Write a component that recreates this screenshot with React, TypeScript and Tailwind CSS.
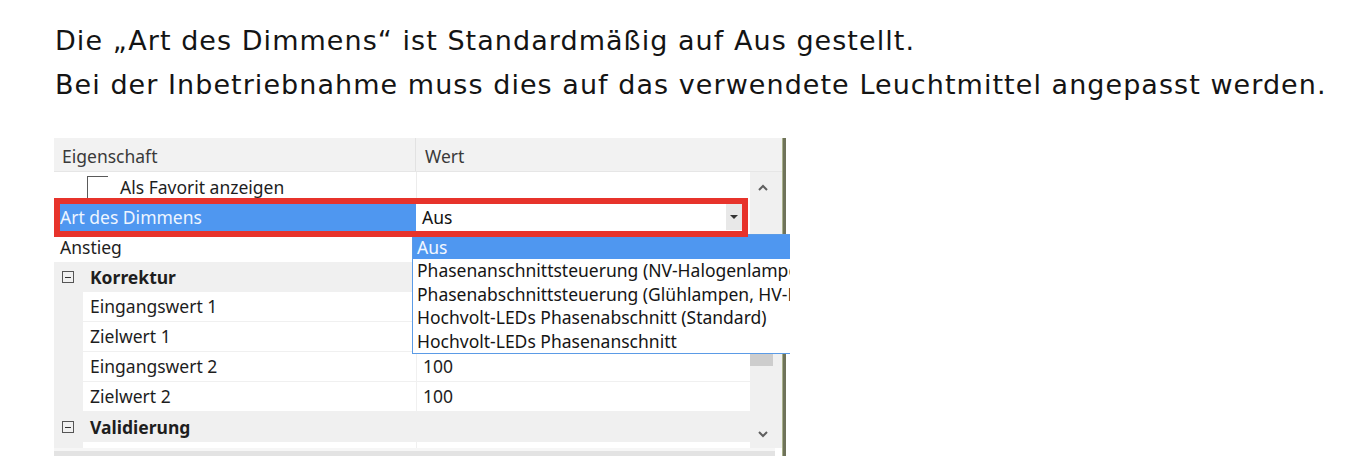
import React from 'react';

function Chevron({ up }: { up?: boolean }) {
  return (
    <svg width="10" height="7" viewBox="0 0 10 7" className="text-[#5f5f5f]">
      <path
        d={up ? 'M1 6 L5 2 L9 6' : 'M1 1 L5 5 L9 1'}
        fill="none"
        stroke="currentColor"
        strokeWidth="2"
      />
    </svg>
  );
}

function MinusBox() {
  return (
    <span className="w-[12px] h-[12px] border border-[#555] flex items-center justify-center shrink-0">
      <span className="w-[6px] h-px bg-[#333]" />
    </span>
  );
}

function ChildRow({ name, value }: { name: string; value?: string }) {
  return (
    <div className="flex h-[30px] border-b border-[#f0f0f0]">
      <div className="w-[29px] bg-[#f0f0f0] shrink-0" />
      <div className="w-[333px] bg-white flex items-center pl-[7px]">{name}</div>
      <div className="flex-1 bg-white border-l border-[#f0f0f0] flex items-center pl-[6px]">{value}</div>
    </div>
  );
}

function CategoryRow({ name }: { name: string }) {
  return (
    <div className="flex items-center h-[30px] bg-[#f0f0f0] pl-[8px]">
      <MinusBox />
      <span className="ml-[16px] font-bold">{name}</span>
    </div>
  );
}

const options = [
  'Aus',
  'Phasenanschnittsteuerung (NV-Halogenlampen)',
  'Phasenabschnittsteuerung (Glühlampen, HV-Halogenlampen)',
  'Hochvolt-LEDs Phasenabschnitt (Standard)',
  'Hochvolt-LEDs Phasenanschnitt',
];

function PropertyGrid() {
  return (
    <div className="relative w-[736px] h-[318px] overflow-hidden flex font-['Noto_Sans','Open_Sans',sans-serif] text-[17.5px] text-[#1e1e1e]">
      <div className="w-[728px] flex flex-col">
        {/* header */}
        <div className="flex h-[34px] bg-[#f2f2f2] border-b border-[#e6e6e6] text-[#3a3a3a]">
          <div className="w-[362px] flex items-center pl-[8px] pt-[4px] border-r border-[#e2e2e2]">Eigenschaft</div>
          <div className="flex-1 flex items-center pl-[9px] pt-[4px]">Wert</div>
        </div>

        <div className="flex h-[276px]">
          <div className="w-[696px] flex flex-col bg-white">
            <div className="flex h-[30px]">
              <div className="w-[362px] relative pl-[66px] flex items-center">
                <span className="absolute left-[33px] top-[4px] w-[21px] h-[24px] border-t border-l border-[#5a5a5a]" />
                Als Favorit anzeigen
              </div>
              <div className="flex-1 border-l border-[#ececec]" />
            </div>

            <div className="flex h-[30px]">
              <div className="w-[362px] bg-[#4f97f0] text-[#eef5ff] flex items-center pl-[6px]">Art des Dimmens</div>
              <div className="flex-1 flex items-center bg-white pl-[6px]">
                <span className="flex-1 text-[#111]">Aus</span>
                <span className="w-[16px] h-[26px] mr-[8px] bg-[#e8e8e8] flex items-center justify-center">
                  <span className="w-0 h-0 border-l-[4px] border-r-[4px] border-t-[4px] border-l-transparent border-r-transparent border-t-[#333]" />
                </span>
              </div>
            </div>

            <div className="flex h-[30px]">
              <div className="w-[362px] flex items-center pl-[6px]">Anstieg</div>
              <div className="flex-1 border-l border-[#ececec]" />
            </div>

            <CategoryRow name="Korrektur" />
            <ChildRow name="Eingangswert 1" />
            <ChildRow name="Zielwert 1" />
            <ChildRow name="Eingangswert 2" value="100" />
            <ChildRow name="Zielwert 2" value="100" />
            <CategoryRow name="Validierung" />
            <div className="flex h-[6px]">
              <div className="w-[29px] bg-[#f0f0f0]" />
              <div className="w-[333px] bg-white" />
              <div className="flex-1 bg-white border-l border-[#f0f0f0]" />
            </div>
          </div>

          {/* vertical scrollbar */}
          <div className="w-[25px] bg-[#f0f0f0] flex flex-col items-center">
            <div className="h-[30px] flex items-center justify-center">
              <Chevron up />
            </div>
            <div className="w-[23px] h-[121px] mt-[43px] self-start bg-[#cdcdcd]" />
            <div className="flex-1" />
            <div className="h-[28px] flex items-center justify-center">
              <Chevron />
            </div>
          </div>
          <div className="flex-1 bg-[#f0f0f0]" />
        </div>

        <div className="h-[3px] w-[721px] bg-[#f6f6f6]" />
        <div className="h-[5px] w-[721px] bg-[#e3e3e3]" />
      </div>

      <div className="w-[4px] bg-[#6f735a] border-l border-[#a9b08a]" />

      {/* open dropdown */}
      <div className="absolute left-[358px] top-[96px] w-[420px] bg-white border border-[#5b9be6]">
        {options.map((o, i) => (
          <div
            key={o}
            className={`h-[23.5px] flex items-center pl-[4px] whitespace-nowrap ${
              i === 0 ? 'bg-[#4f97f0] text-[#f2f7ff]' : 'text-[#151515]'
            }`}
          >
            {o}
          </div>
        ))}
      </div>

      {/* highlighted row */}
      <div className="absolute left-0 top-[60px] w-[694px] h-[39px] border-[6px] border-[#e7332b]" />
    </div>
  );
}

export default function App() {
  return (
    <div className="w-[1370px] h-[474px] bg-white overflow-hidden">
      <div className="pl-[55px] pt-[19px] font-['DejaVu_Sans',sans-serif] text-[27px] leading-[44px] tracking-[1.05px] text-[#141414]">
        <p>Die „Art des Dimmens“ ist Standardmäßig auf Aus gestellt.</p>
        <p>Bei der Inbetriebnahme muss dies auf das verwendete Leuchtmittel angepasst werden.</p>
      </div>
      <div className="ml-[54px] mt-[31px]">
        <PropertyGrid />
      </div>
    </div>
  );
}
